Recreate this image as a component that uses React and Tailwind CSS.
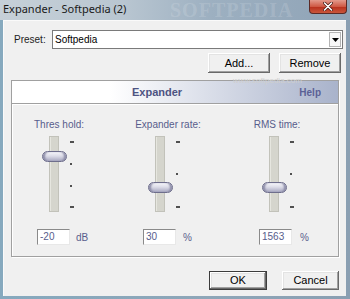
import React from "react";

const F = { fontFamily: '"Liberation Sans", Arial, sans-serif' };

function Btn({ children, w, def, h = "h-[20px]" }) {
  return (
    <div
      className={`${w} ${h} flex items-center justify-center text-[11px] text-black bg-[#f0f0f0] ${
        def ? "border border-[#3c3c3c]" : ""
      } shadow-[inset_-1px_-1px_0_#696969,inset_1px_1px_0_#ffffff,inset_-2px_-2px_0_#a0a0a0,inset_2px_2px_0_#e3e3e3]`}
    >
      {children}
    </div>
  );
}

function Slider({ thumbTop, ticks }) {
  return (
    <div className="flex">
      <div className="relative w-[25px] h-[76px]">
        <div className="absolute left-[7px] top-0 w-[10px] h-[76px] bg-[#d5d5cd] border border-[#c2c2ba] shadow-[inset_1px_0_0_#e6e6df]" />
        <div
          className="absolute left-0 w-[25px] h-[11px] rounded-full border border-[#6e6e8c] bg-[linear-gradient(to_bottom,#f6f6fa_0%,#dcdce8_45%,#a8a8c0_100%)] shadow-[inset_3px_0_2px_-1px_#8c8ca8,inset_-3px_0_2px_-1px_#8c8ca8]"
          style={{ top: thumbTop }}
        />
      </div>
      <div className="relative ml-[3px] w-[4px] h-[76px]">
        {ticks.map((t, i) => (
          <div
            key={i}
            className="absolute left-0 h-[2px] bg-[#505050]"
            style={{ top: t.y, width: t.w }}
          />
        ))}
      </div>
    </div>
  );
}

function ValBox({ value, unit, unitMl }) {
  return (
    <div className="flex items-center w-[60px]">
      <div className="w-[33px] h-[16px] bg-white border-t border-l border-[#8a8a8a] border-r border-b border-r-[#e8e8e8] border-b-[#e8e8e8] pl-[2px] text-[10px] leading-[14px] text-[#585d8c]">
        {value}
      </div>
      <div className={`${unitMl} text-[10px] text-[#585d8c]`}>{unit}</div>
    </div>
  );
}

export default function App() {
  const ticks4 = [
    { y: 5, w: 4 },
    { y: 27, w: 2 },
    { y: 49, w: 2 },
    { y: 70, w: 4 },
  ];
  const ticks3 = [
    { y: 5, w: 4 },
    { y: 37, w: 2 },
    { y: 70, w: 4 },
  ];
  return (
    <div
      className="relative w-[350px] h-[299px] flex flex-col overflow-hidden bg-[linear-gradient(to_right,#86a9be,#8ea6b8_60%,#8a9fb2)]"
      style={F}
    >
      {/* title bar */}
      <div className="relative h-[20px] flex items-start bg-[linear-gradient(to_right,#c6d0d8,#b9c6d1_35%,#9db0c1_60%,#8fa3b6)]">
        <div
          className="pl-[3px] pt-[3px] text-[11px] leading-[12px] text-[#1a1a1a]"
          style={{ fontFamily: '"Noto Sans", "Open Sans", sans-serif' }}
        >
          Expander - Softpedia (2)
        </div>
        <div
          className="absolute left-[170px] top-[0px] text-[20px] leading-[20px] font-bold tracking-[1px] text-white/15 pointer-events-none"
          style={{ fontFamily: '"Liberation Serif", serif' }}
        >
          SOFTPEDIA
        </div>
        <div className="ml-auto mr-[3px] w-[38px] h-[14px] rounded-b-[4px] border border-t-0 border-[#5b2a26] bg-[linear-gradient(to_bottom,#e39a8c,#cf5a45_50%,#b9321e_55%,#c9563c)] flex items-center justify-center">
          <svg width="10" height="9" viewBox="0 0 10 9">
            <path d="M1.5 1 L8.5 8 M8.5 1 L1.5 8" stroke="#4a1a14" strokeWidth="3" strokeLinecap="round" />
            <path d="M1.5 1 L8.5 8 M8.5 1 L1.5 8" stroke="#ffffff" strokeWidth="1.6" strokeLinecap="round" />
          </svg>
        </div>
      </div>

      {/* client area */}
      <div className="flex-1 ml-[3px] mr-[4px] mb-[3px] bg-[#f0f0f0] border-l border-t border-[#fafafa] flex flex-col">
        {/* preset row */}
        <div className="mt-[9px] flex items-center">
          <div className="pl-[10px] w-[48px] text-[10px] text-[#1e1e1e]">Preset:</div>
          <div className="w-[291px] h-[19px] bg-white border border-[#7a7a7a] flex items-center">
            <div className="pl-[2px] text-[10px] text-black">Softpedia</div>
            <div className="ml-auto mr-[1px] w-[12px] h-[15px] bg-[#f7f7f7] border border-[#b4b4b4] flex items-center justify-center">
              <svg width="7" height="4" viewBox="0 0 7 4">
                <path d="M0 0 H7 L3.5 4 Z" fill="#000" />
              </svg>
            </div>
          </div>
        </div>

        {/* add / remove */}
        <div className="mt-[4px] flex justify-end gap-[9px] pr-[5px]">
          <Btn w="w-[62px]">Add...</Btn>
          <Btn w="w-[62px]">Remove</Btn>
        </div>

        {/* panel */}
        <div className="relative mt-[7px] ml-[7px] w-[328px] h-[177px] border border-[#a0a0a0] shadow-[1px_1px_0_#ffffff,inset_1px_1px_0_#ffffff] flex flex-col">
          <div className="h-[23px] border-b border-[#a0a0a0] bg-[linear-gradient(to_right,#ffffff_30%,#e4e7ef_52%,#a9b3cb_100%)] flex items-center">
            <div className="ml-[120px] text-[11px] font-bold text-[#4d5382]">Expander</div>
            <div className="ml-auto mr-[17px] text-[10px] font-bold text-[#5b6196]">Help</div>
          </div>
          <div className="h-[1px] bg-white" />
          <div className="absolute left-[221px] top-[-6px] text-[8px] text-[#cfcfcf] pointer-events-none">
            www.softpedia.com
          </div>

          {/* labels */}
          <div className="mt-[13px] flex gap-[17px] ml-[1px] h-[13px] items-center">
            <div className="w-[92px] text-center text-[10px] text-[#585d8c]">Thres hold:</div>
            <div className="w-[92px] text-center text-[10px] text-[#585d8c]">Expander rate:</div>
            <div className="w-[92px] text-center text-[10px] text-[#585d8c]">RMS time:</div>
          </div>

          {/* sliders */}
          <div className="mt-[5px] flex">
            <div className="ml-[30px]">
              <Slider thumbTop={15} ticks={ticks4} />
            </div>
            <div className="ml-[74px]">
              <Slider thumbTop={46} ticks={ticks3} />
            </div>
            <div className="ml-[82px]">
              <Slider thumbTop={46} ticks={ticks3} />
            </div>
          </div>

          {/* values */}
          <div className="mt-[17px] flex">
            <div className="ml-[25px]">
              <ValBox value="-20" unit="dB" unitMl="ml-[6px]" />
            </div>
            <div className="ml-[46px]">
              <ValBox value="30" unit="%" unitMl="ml-[7px]" />
            </div>
            <div className="ml-[56px]">
              <ValBox value="1563" unit="%" unitMl="ml-[8px]" />
            </div>
          </div>
        </div>

        {/* ok / cancel */}
        <div className="mt-[14px] flex justify-end gap-[15px] pr-[7px]">
          <Btn w="w-[58px]" h="h-[19px]" def>
            OK
          </Btn>
          <Btn w="w-[57px]" h="h-[19px]">Cancel</Btn>
        </div>
      </div>
    </div>
  );
}
